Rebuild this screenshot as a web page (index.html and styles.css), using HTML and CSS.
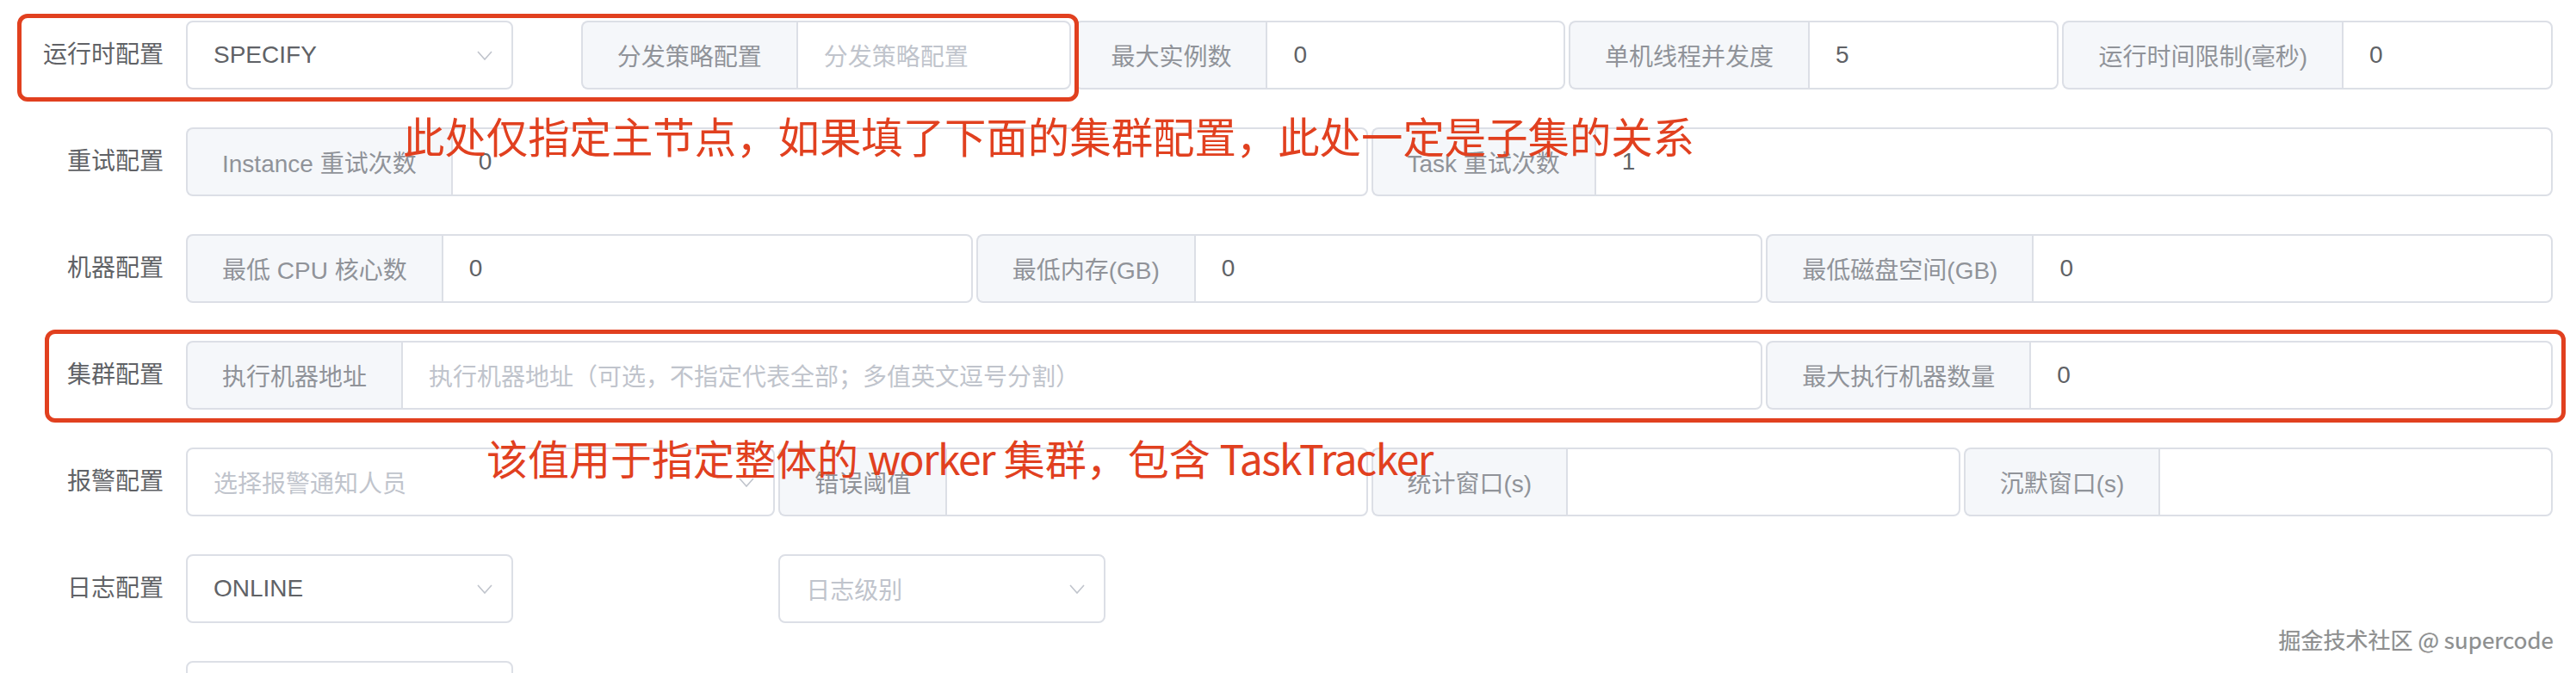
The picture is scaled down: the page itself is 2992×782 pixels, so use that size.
FILE: index.html
```html
<!DOCTYPE html>
<html lang="zh-CN">
<head>
<meta charset="utf-8">
<title>任务配置</title>
<link rel="stylesheet" href="styles.css">
</head>
<body>
<div class="page">
  <form class="form">
    <div class="form-item">
      <label class="label">运行时配置</label>
      <div class="content">
        <div class="col s4">
          <div class="select"><span class="value">SPECIFY</span><svg class="chev" viewBox="0 0 18 11"><polyline points="1,1 9,10 17,1"/></svg></div>
        </div>
        <div class="col s5"><div class="group"><span class="prepend">分发策略配置</span><span class="input ph">分发策略配置</span></div></div>
        <div class="col s5"><div class="group"><span class="prepend">最大实例数</span><span class="input">0</span></div></div>
        <div class="col s5"><div class="group"><span class="prepend">单机线程并发度</span><span class="input">5</span></div></div>
        <div class="col s5"><div class="group"><span class="prepend">运行时间限制(毫秒)</span><span class="input">0</span></div></div>
      </div>
    </div>

    <div class="form-item">
      <label class="label">重试配置</label>
      <div class="content">
        <div class="col s12"><div class="group"><span class="prepend">Instance 重试次数</span><span class="input">0</span></div></div>
        <div class="col s12"><div class="group"><span class="prepend">Task 重试次数</span><span class="input">1</span></div></div>
      </div>
    </div>

    <div class="form-item">
      <label class="label">机器配置</label>
      <div class="content">
        <div class="col s8"><div class="group"><span class="prepend">最低 CPU 核心数</span><span class="input">0</span></div></div>
        <div class="col s8"><div class="group"><span class="prepend">最低内存(GB)</span><span class="input">0</span></div></div>
        <div class="col s8"><div class="group"><span class="prepend">最低磁盘空间(GB)</span><span class="input">0</span></div></div>
      </div>
    </div>

    <div class="form-item">
      <label class="label">集群配置</label>
      <div class="content">
        <div class="col s16"><div class="group"><span class="prepend">执行机器地址</span><span class="input ph">执行机器地址（可选，不指定代表全部；多值英文逗号分割）</span></div></div>
        <div class="col s8"><div class="group"><span class="prepend">最大执行机器数量</span><span class="input">0</span></div></div>
      </div>
    </div>

    <div class="form-item">
      <label class="label">报警配置</label>
      <div class="content">
        <div class="col s6">
          <div class="select full"><span class="value ph">选择报警通知人员</span><svg class="chev" viewBox="0 0 18 11"><polyline points="1,1 9,10 17,1"/></svg></div>
        </div>
        <div class="col s6"><div class="group"><span class="prepend">错误阈值</span><span class="input"></span></div></div>
        <div class="col s6"><div class="group"><span class="prepend">统计窗口(s)</span><span class="input"></span></div></div>
        <div class="col s6"><div class="group"><span class="prepend">沉默窗口(s)</span><span class="input"></span></div></div>
      </div>
    </div>

    <div class="form-item">
      <label class="label">日志配置</label>
      <div class="content">
        <div class="col s6">
          <div class="select"><span class="value">ONLINE</span><svg class="chev" viewBox="0 0 18 11"><polyline points="1,1 9,10 17,1"/></svg></div>
        </div>
        <div class="col s6">
          <div class="select"><span class="value ph">日志级别</span><svg class="chev" viewBox="0 0 18 11"><polyline points="1,1 9,10 17,1"/></svg></div>
        </div>
      </div>
    </div>

    <div class="form-item">
      <span class="label"></span>
      <div class="content">
        <div class="col s6">
          <div class="select"><span class="value"></span></div>
        </div>
      </div>
    </div>
  </form>

  <div class="mark mark-runtime"></div>
  <div class="mark mark-cluster"></div>
  <div class="note note-runtime">此处仅指定主节点，如果填了下面的集群配置，此处一定是子集的关系</div>
  <div class="note note-cluster">该值用于指定整体的 <span class="latin">worker</span> 集群，包含 <span class="latin">TaskTracker</span></div>
  <div class="watermark">掘金技术社区 @ supercode</div>
</div>
</body>
</html>
```

FILE: styles.css
```css
html, body {
  margin: 0;
  padding: 0;
  height: 782px;
  overflow: hidden;
  background: #ffffff;
}

.page {
  position: relative;
  width: 2992px;
  height: 782px;
  overflow: hidden;
  font-family: "Liberation Sans", "Noto Sans CJK SC", sans-serif;
  font-size: 28px;
  color: #606266;
}

.form {
  margin: 0;
  padding: 24px 27px 0 0;
}

.form-item {
  display: flex;
  height: 80px;
  margin-bottom: 44px;
}

.label {
  flex: 0 0 216px;
  box-sizing: border-box;
  padding-right: 26px;
  text-align: right;
  line-height: 80px;
  color: #606266;
  white-space: nowrap;
}

.content {
  flex: 1;
  display: grid;
  grid-template-columns: repeat(24, minmax(0, 1fr));
  column-gap: 4px;
}

.s4 { grid-column: span 4; }
.s5 { grid-column: span 5; }
.s6 { grid-column: span 6; }
.s8 { grid-column: span 8; }
.s12 { grid-column: span 12; }
.s16 { grid-column: span 16; }

.col {
  min-width: 0;
}

.group {
  display: flex;
  height: 80px;
}

.prepend {
  display: flex;
  align-items: center;
  box-sizing: border-box;
  height: 80px;
  padding: 0 40px;
  background: #f5f7fa;
  color: #909399;
  border: 2px solid #dcdfe6;
  border-right: 0;
  border-radius: 8px 0 0 8px;
  white-space: nowrap;
}

.input {
  flex: 1;
  display: flex;
  align-items: center;
  box-sizing: border-box;
  height: 80px;
  padding: 0 30px;
  border: 2px solid #dcdfe6;
  border-radius: 0 8px 8px 0;
  color: #606266;
  white-space: nowrap;
  overflow: hidden;
  min-width: 0;
}

.ph {
  color: #c0c4cc;
}

.select {
  display: flex;
  align-items: center;
  justify-content: space-between;
  box-sizing: border-box;
  width: 380px;
  height: 80px;
  padding: 0 22px 0 30px;
  border: 2px solid #dcdfe6;
  border-radius: 8px;
  background: #fff;
}

.select.full {
  width: 100%;
}

.value {
  white-space: nowrap;
}

.value.ph {
  color: #c0c4cc;
}

.chev {
  width: 18px;
  height: 11px;
  fill: none;
  stroke: #c0c4cc;
  stroke-width: 1.6;
}

.mark {
  position: absolute;
  box-sizing: border-box;
  border: 5px solid #e1401f;
  border-radius: 12px;
}

.mark-runtime {
  left: 20px;
  top: 16px;
  width: 1233px;
  height: 102px;
}

.mark-cluster {
  left: 52px;
  top: 383px;
  width: 2928px;
  height: 108px;
}

.note {
  position: absolute;
  font-family: "Noto Sans CJK SC", "Liberation Sans", sans-serif;
  font-size: 48.4px;
  line-height: 1;
  color: #e1401f;
  white-space: nowrap;
}

.note .latin {
  letter-spacing: -1.6px;
}

.note-runtime {
  left: 468px;
  top: 133px;
}

.note-cluster {
  left: 565px;
  top: 507px;
  font-size: 48px;
}

.watermark {
  position: absolute;
  right: 26px;
  top: 730px;
  font-family: "Noto Sans CJK SC", "Liberation Sans", sans-serif;
  font-size: 26px;
  line-height: 1;
  color: #8e8e8e;
  text-shadow: 1px 1px 0 rgba(255, 255, 255, 0.9), 0 0 1px rgba(0, 0, 0, 0.35);
  white-space: nowrap;
}
```
